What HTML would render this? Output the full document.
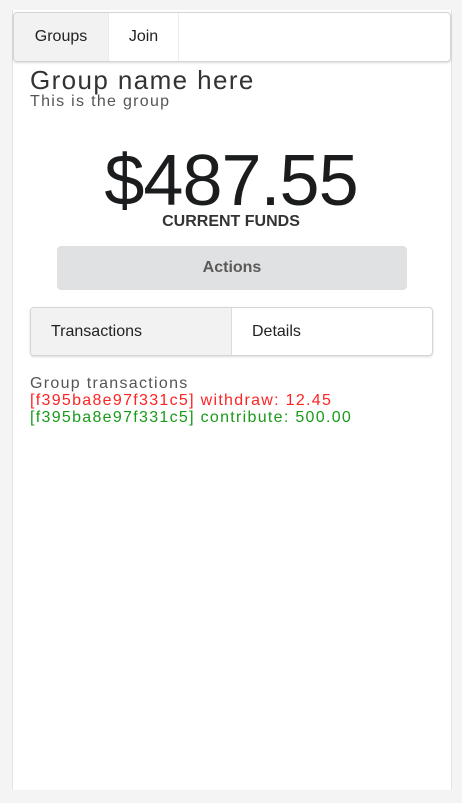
<!DOCTYPE html>
<html><head><style>
body{margin:0;width:462px;height:803px;background:#f4f4f4;font-family:"Liberation Sans",sans-serif;position:relative;overflow:hidden}
.panel{position:absolute;left:12px;top:10px;width:438px;height:780px;background:#fff;border-left:1px solid #e4e4e4;border-right:1px solid #e4e4e4}
.menu{position:absolute;left:13px;top:12px;width:436px;height:48px;border:1px solid #d4d4d5;border-radius:4px;box-shadow:0 1px 2px rgba(0,0,0,.15);background:#fff;display:flex;overflow:hidden}
.menu div{font-size:16px;color:#222;line-height:48px;text-align:center;border-right:1px solid #ececec}
.abs{position:absolute;white-space:nowrap}
</style></head><body>
<div class="panel"></div>
<div class="menu"><div style="width:94px;background:#f2f2f2">Groups</div><div style="width:69px">Join</div></div>
<div class="abs" style="left:30px;top:65px;font-size:26px;color:#333;letter-spacing:1.4px">Group name here</div>
<div class="abs" style="left:30px;top:93px;font-size:16px;color:#555;letter-spacing:1.3px">This is the group</div>
<div class="abs" style="left:0;width:462px;text-align:center;top:140px;font-size:72px;color:#1b1c1d;letter-spacing:-1px">$487.55</div>
<div class="abs" style="left:0;width:462px;text-align:center;top:213px;font-size:16px;font-weight:bold;color:#333">CURRENT FUNDS</div>
<div class="abs" style="left:57px;top:246px;width:350px;height:44px;background:#e0e1e2;border-radius:4px;text-align:center;line-height:44px;font-size:16px;font-weight:bold;color:#5a5a5a">Actions</div>
<div class="abs" style="left:30px;top:307px;width:401px;height:47px;border:1px solid #d4d4d5;border-radius:4px;box-shadow:0 1px 2px rgba(0,0,0,.15);display:flex;overflow:hidden">
<div style="width:201px;background:#f2f2f2;border-right:1px solid #ddd;line-height:48px;font-size:16px;color:#222;padding-left:20px;box-sizing:border-box">Transactions</div>
<div style="line-height:48px;font-size:16px;color:#222;padding-left:20px">Details</div></div>
<div class="abs" style="left:30px;top:375px;font-size:16px;line-height:17px;color:#555;letter-spacing:1.3px">Group transactions<br><span style="color:#f22">[f395ba8e97f331c5] withdraw: 12.45</span><br><span style="color:#1a9a1a">[f395ba8e97f331c5] contribute: 500.00</span></div>
</body></html>
